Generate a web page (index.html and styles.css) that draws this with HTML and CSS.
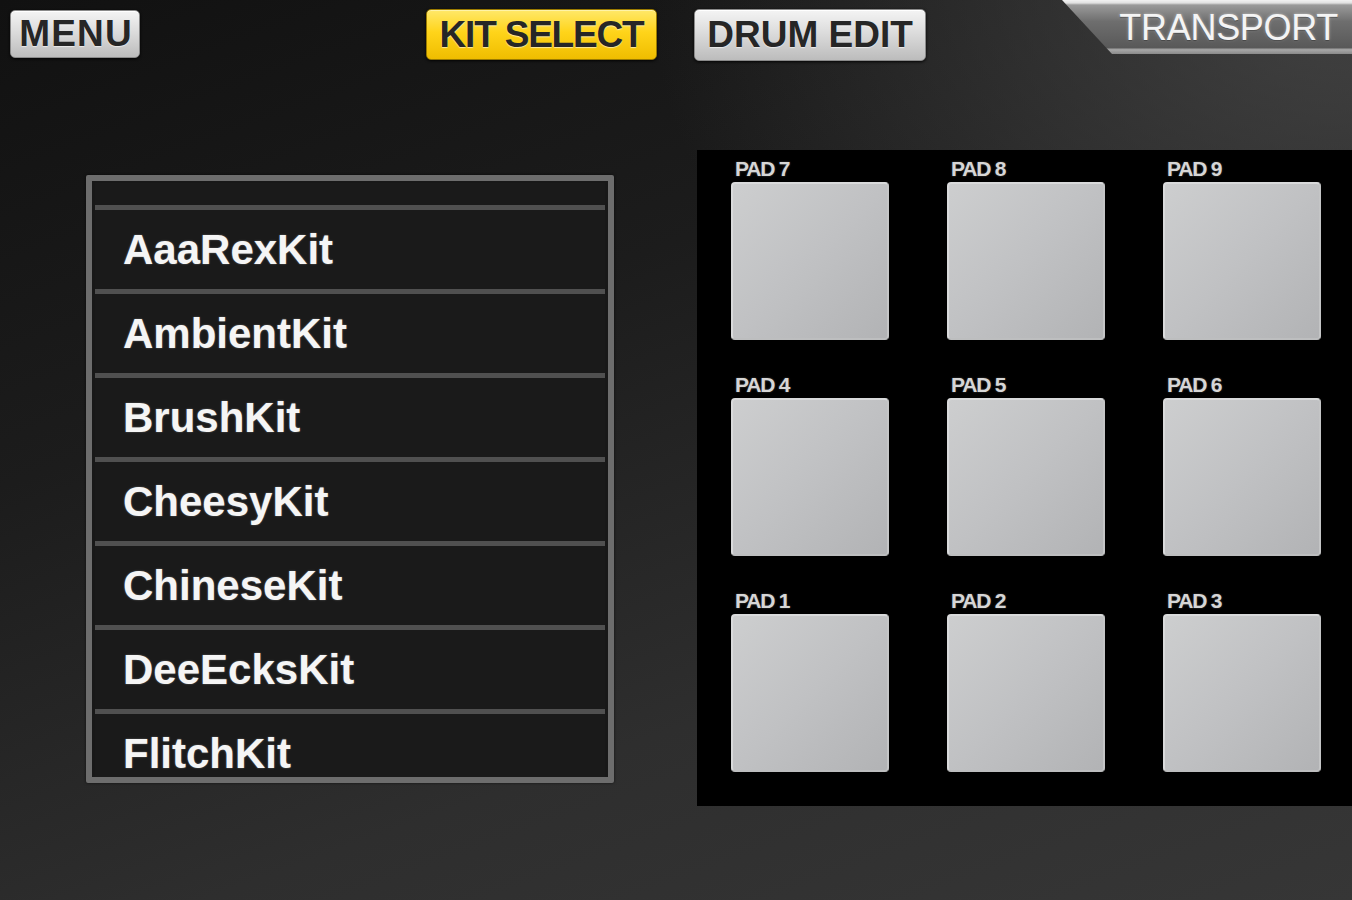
FILE: index.html
```html
<!DOCTYPE html>
<html lang="en">
<head>
    <meta charset="UTF-8">
    <title>Drum Kit Select</title>
    <link rel="stylesheet" href="styles.css">
</head>
<body>
    <div class="app">
        <div class="topbar">
            <div class="btn btn-menu">MENU</div>
            <div class="btn btn-kit active">KIT SELECT</div>
            <div class="btn btn-drum">DRUM EDIT</div>
            <div class="tab-transport"><span>TRANSPORT</span></div>
        </div>

        <div class="main">
            <div class="kit-list">
                <div class="kit-spacer"></div>
                <div class="kit-row">AaaRexKit</div>
                <div class="kit-row">AmbientKit</div>
                <div class="kit-row">BrushKit</div>
                <div class="kit-row">CheesyKit</div>
                <div class="kit-row">ChineseKit</div>
                <div class="kit-row">DeeEcksKit</div>
                <div class="kit-row">FlitchKit</div>
            </div>

            <div class="pad-panel">
                <div class="pad-cell"><div class="pad-label">PAD 7</div><div class="pad"></div></div>
                <div class="pad-cell"><div class="pad-label">PAD 8</div><div class="pad"></div></div>
                <div class="pad-cell"><div class="pad-label">PAD 9</div><div class="pad"></div></div>
                <div class="pad-cell"><div class="pad-label">PAD 4</div><div class="pad"></div></div>
                <div class="pad-cell"><div class="pad-label">PAD 5</div><div class="pad"></div></div>
                <div class="pad-cell"><div class="pad-label">PAD 6</div><div class="pad"></div></div>
                <div class="pad-cell"><div class="pad-label">PAD 1</div><div class="pad"></div></div>
                <div class="pad-cell"><div class="pad-label">PAD 2</div><div class="pad"></div></div>
                <div class="pad-cell"><div class="pad-label">PAD 3</div><div class="pad"></div></div>
            </div>
        </div>
    </div>
</body>
</html>
```

FILE: styles.css
```css
body {
    margin: 0;
    font-family: 'Liberation Sans', Arial, sans-serif;
    overflow: hidden;
}

.app {
    width: 1352px;
    height: 900px;
    background:
        radial-gradient(ellipse 700px 500px at 100% 0%, rgba(78, 78, 78, 0.75), rgba(78, 78, 78, 0) 100%),
        linear-gradient(160deg, #111111 0%, #1c1c1c 35%, #2e2e2e 70%, #363636 100%);
    overflow: hidden;
}

/* barre du haut */
.topbar {
    display: flex;
    align-items: flex-start;
    height: 62px;
}

.btn {
    box-sizing: border-box;
    display: flex;
    align-items: center;
    justify-content: center;
    font-weight: bold;
    font-size: 37px;
    letter-spacing: -1.2px;
    color: #262626;
    text-shadow: 0 1px 1px rgba(255, 255, 255, 0.6);
    background: linear-gradient(to bottom, #f4f4f4 0%, #dcdcdc 45%, #bcbcbc 100%);
    border: 1px solid #8a8a8a;
    border-radius: 5px;
    box-shadow: 0 1px 3px rgba(0, 0, 0, 0.9), inset 0 1px 0 #ffffff;
}

.btn-menu {
    margin: 10px 0 0 10px;
    width: 130px;
    height: 48px;
    letter-spacing: 1.2px;
    padding-left: 2px;
}

.btn-kit {
    margin: 9px 0 0 286px;
    width: 231px;
    height: 51px;
}

.btn-kit.active {
    background: linear-gradient(to bottom, #ffe86a 0%, #ffd41a 45%, #efbd00 100%);
    border-color: #9a7a00;
    box-shadow: 0 1px 3px rgba(0, 0, 0, 0.9), inset 0 1px 0 #fff3a8;
}

.btn-drum {
    margin: 9px 0 0 37px;
    width: 232px;
    height: 52px;
    letter-spacing: 0;
}

.tab-transport {
    margin-left: auto;
    width: 290px;
    height: 54px;
    background: linear-gradient(to bottom, #f2f2f2 0px, #e0e0e0 3px, #9a9a9a 5px, #6e6e6e 40%, #595959 88%, #a8a8a8 92%, #8a8a8a 100%);
    clip-path: polygon(0 0, 100% 0, 100% 100%, 50px 100%);
    display: flex;
    align-items: center;
    justify-content: flex-end;
    padding-right: 14px;
    box-sizing: border-box;
}

.tab-transport span {
    font-size: 36px;
    color: #f4f4f4;
    letter-spacing: -0.3px;
    text-shadow: 0 0 3px rgba(255, 255, 255, 0.5), 0 1px 1px rgba(0, 0, 0, 0.6);
    margin-top: 2px;
}

/* zone principale */
.main {
    display: flex;
    align-items: flex-start;
}

.kit-list {
    box-sizing: border-box;
    margin: 113px 0 0 86px;
    width: 528px;
    height: 608px;
    border: 6px solid #6d6d6d;
    border-radius: 2px;
    background-color: #181818;
    padding: 2px 3px 0 3px;
    overflow: hidden;
    box-shadow: 0 0 3px rgba(0, 0, 0, 0.6);
}

.kit-spacer {
    height: 22px;
    background-color: #1a1a1a;
    border-bottom: 5px solid #505050;
}

.kit-row {
    height: 79px;
    border-bottom: 5px solid #505050;
    background-color: #1a1a1a;
    display: flex;
    align-items: center;
    padding-left: 28px;
    font-size: 42px;
    font-weight: bold;
    color: #f5f5f5;
    text-shadow: 0 0 2px rgba(255, 255, 255, 0.35);
}

.pad-panel {
    margin: 88px 0 0 83px;
    width: 655px;
    height: 656px;
    box-sizing: border-box;
    background-color: #000000;
    padding: 8px 0 0 34px;
    display: grid;
    grid-template-columns: repeat(3, 158px);
    grid-auto-rows: 182px;
    column-gap: 58px;
    row-gap: 34px;
}

.pad-cell {
    display: flex;
    flex-direction: column;
}

.pad-label {
    height: 24px;
    padding-left: 4px;
    font-size: 21px;
    font-weight: bold;
    letter-spacing: -1.2px;
    line-height: 22px;
    color: #d6d6d6;
    text-shadow: 0 0 2px rgba(255, 255, 255, 0.3);
}

.pad {
    width: 158px;
    height: 158px;
    box-sizing: border-box;
    border-radius: 4px;
    background: linear-gradient(135deg, #cdcecf 0%, #c0c1c3 50%, #b2b3b5 100%);
    border: 2px solid #d9dadb;
    border-right-color: #c4c5c6;
    border-bottom-color: #bdbebf;
}
```
